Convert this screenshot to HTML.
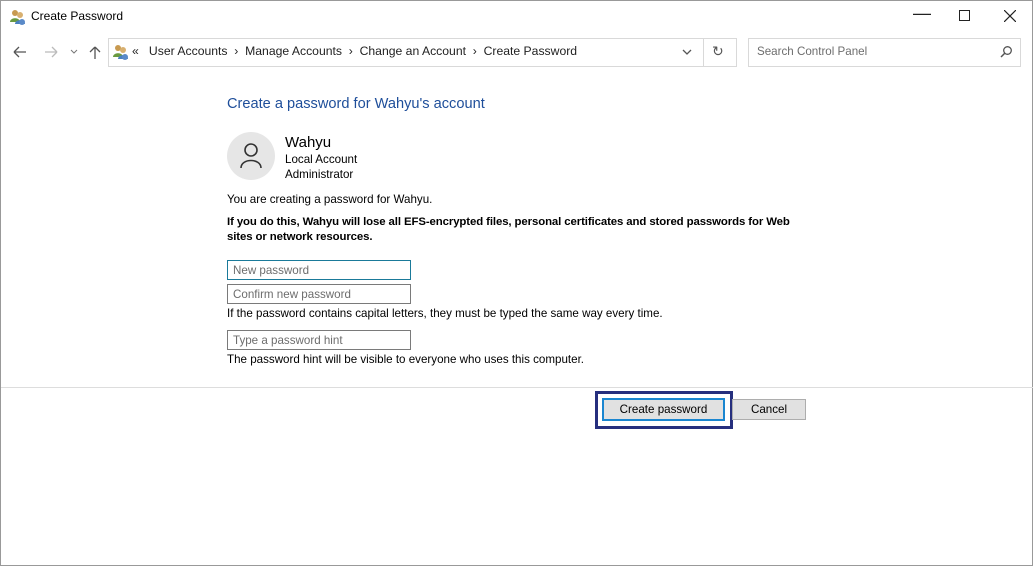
<!DOCTYPE html>
<html><head><style>
*{margin:0;padding:0;box-sizing:border-box}
body{width:1033px;height:566px;background:#fff;font-family:"Liberation Sans",sans-serif;font-size:11.6px;color:#000;position:relative;overflow:hidden;border:1px solid #999}
.a{position:absolute;white-space:nowrap}
.inp{position:absolute;border:1px solid #7a7a7a;height:20px;color:#6d6d6d;padding:3px 0 0 5px;font-size:11.6px;width:184px;left:226px}
</style></head><body>
<svg class="a" style="left:8px;top:7px" width="18" height="18"><circle cx="6" cy="5" r="3" fill="#c89a50"/><path d="M1 14c0-5 10-5 10 0z" fill="#6a9a40"/><circle cx="11" cy="7" r="3" fill="#d8b070"/><path d="M6 16c0-5 10-5 10 0z" fill="#4a80c0"/><circle cx="13" cy="14" r="3" fill="#5a8ac8"/></svg>
<div class="a" style="left:30px;top:8px;font-size:12px">Create Password</div>
<div class="a" style="left:912px;top:2px;font-size:18px;color:#222">&#8212;</div>
<div class="a" style="left:958px;top:9px;width:11px;height:11px;border:1px solid #222"></div>
<svg class="a" style="left:1003px;top:9px" width="12" height="12"><path d="M0 0L12 12M12 0L0 12" stroke="#222" stroke-width="1.2"/></svg>
<svg class="a" style="left:12px;top:44px" width="95" height="14"><path d="M1 7h12M1 7l5-5M1 7l5 5" stroke="#555" fill="none" stroke-width="1.3"/><path d="M44 7h-12M44 7l-5-5M44 7l-5 5" stroke="#bbb" fill="none" stroke-width="1.3"/><path d="M58 5l3 3 3-3" stroke="#777" fill="none"/><path d="M82 2v12M82 2l-5 5M82 2l5 5" stroke="#555" fill="none" stroke-width="1.3"/></svg>
<div class="a" style="left:107px;top:37px;width:629px;height:29px;border:1px solid #d9d9d9"></div>
<div class="a" style="left:702px;top:37px;width:1px;height:29px;background:#d9d9d9"></div>
<svg class="a" style="left:111px;top:42px" width="18" height="18"><circle cx="6" cy="5" r="3" fill="#c89a50"/><path d="M1 14c0-5 10-5 10 0z" fill="#6a9a40"/><circle cx="11" cy="7" r="3" fill="#d8b070"/><path d="M6 16c0-5 10-5 10 0z" fill="#4a80c0"/><circle cx="13" cy="14" r="3" fill="#5a8ac8"/></svg>
<div class="a" style="left:131px;top:43px;font-size:12.2px;color:#222">« &nbsp; User Accounts &nbsp;› &nbsp;Manage Accounts &nbsp;› &nbsp;Change an Account &nbsp;› &nbsp;Create Password</div>
<svg class="a" style="left:681px;top:48px" width="10" height="7"><path d="M1 1l4 4 4-4" stroke="#555" fill="none" stroke-width="1.3"/></svg>
<div class="a" style="left:711px;top:42px;font-size:14px;color:#555">↻</div>
<div class="a" style="left:747px;top:37px;width:273px;height:29px;border:1px solid #d9d9d9"></div>
<div class="a" style="left:756px;top:44px;color:#6d6d6d">Search Control Panel</div>
<svg class="a" style="left:999px;top:44px" width="13" height="13"><circle cx="7.5" cy="5.5" r="3.8" stroke="#555" fill="none" stroke-width="1.3"/><path d="M5 8l-4 4" stroke="#555" stroke-width="1.5"/></svg>
<div class="a" style="left:226px;top:95px;font-size:14.6px;color:#1e4e9a">Create a password for Wahyu's account</div>
<div class="a" style="left:226px;top:131px;width:48px;height:48px;border-radius:50%;background:#e6e6e6"></div>
<svg class="a" style="left:238px;top:141px" width="24" height="28"><circle cx="12" cy="8" r="6" stroke="#333" fill="none" stroke-width="1.6"/><path d="M2 26c0-10 20-10 20 0" stroke="#333" fill="none" stroke-width="1.6"/></svg>
<div class="a" style="left:284px;top:133px;font-size:15px">Wahyu</div>
<div class="a" style="left:284px;top:152px">Local Account</div>
<div class="a" style="left:284px;top:167px">Administrator</div>
<div class="a" style="left:226px;top:192px">You are creating a password for Wahyu.</div>
<div class="a" style="left:226px;top:214px;font-weight:bold;line-height:15px;font-size:11.4px;letter-spacing:-0.1px">If you do this, Wahyu will lose all EFS-encrypted files, personal certificates and stored passwords for Web<br>sites or network resources.</div>
<div class="inp" style="top:259px;border-color:#1a7a9a">New password</div>
<div class="inp" style="top:283px">Confirm new password</div>
<div class="a" style="left:226px;top:306px">If the password contains capital letters, they must be typed the same way every time.</div>
<div class="inp" style="top:329px">Type a password hint</div>
<div class="a" style="left:226px;top:352px">The password hint will be visible to everyone who uses this computer.</div>
<div class="a" style="left:0;top:386px;width:1033px;height:1px;background:#ddd"></div>
<div class="a" style="left:594px;top:390px;width:138px;height:38px;border:3px solid #262f7e"></div>
<div class="a" style="left:601px;top:397px;width:123px;height:23px;background:#e1e1e1;border:2px solid #1a86d0;text-align:center;padding-top:3px">Create password</div>
<div class="a" style="left:731px;top:398px;width:74px;height:21px;background:#e1e1e1;border:1px solid #adadad;text-align:center;padding-top:3px">Cancel</div>
</body></html>
